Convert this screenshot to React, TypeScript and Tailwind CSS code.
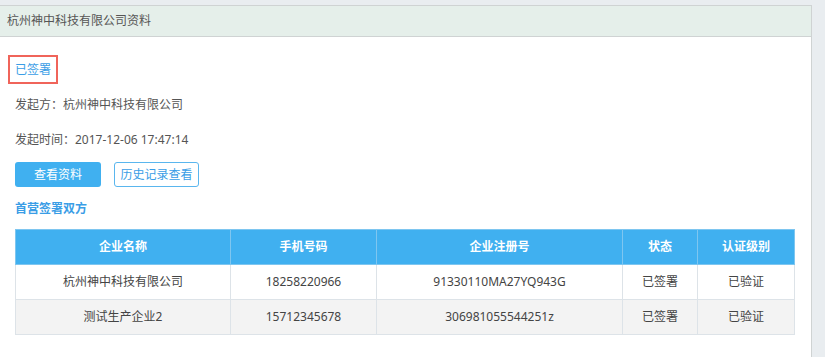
const rows = [
  { name: "杭州神中科技有限公司", phone: "18258220966", reg: "91330110MA27YQ943G", status: "已签署", level: "已验证" },
  { name: "测试生产企业2", phone: "15712345678", reg: "306981055544251z", status: "已签署", level: "已验证" },
];

const cols = ["w-[215px]", "w-[146px]", "w-[246px]", "w-[75px]", "w-[97px]"];

export default function App() {
  return (
    <div
      className="flex h-[357px] w-[825px] bg-[#e9edf0] pt-[5px]"
      style={{ fontFamily: '"Noto Sans", "Noto Sans CJK SC", sans-serif' }}
    >
      <div className="w-[812px] border-r border-t border-[#cfd3d3] bg-white">
        <div className="flex h-[31px] items-center border-b border-[#cfd3d3] bg-[#e5efea] pl-[7px] text-[12px] text-[#555]">
          杭州神中科技有限公司资料
        </div>
        <div className="px-[15px]">
          <div className="-ml-[7px] mt-[18px] inline-flex h-[29px] items-center border-2 border-[#f0645a] px-[5px] text-[12px] text-[#3a9de6]">
            已签署
          </div>
          <div className="mt-[13px] text-[12px] leading-[16px] text-[#555]">发起方：杭州神中科技有限公司</div>
          <div className="mt-[19px] text-[12px] leading-[16px] text-[#555]">发起时间：2017-12-06 17:47:14</div>
          <div className="mt-[14px] flex gap-[13px]">
            <button className="h-[25px] w-[86px] rounded-[3px] bg-[#40b0f0] text-[12px] text-white">查看资料</button>
            <button className="h-[25px] w-[85px] rounded-[3px] border border-[#5ab6ee] bg-white text-[12px] text-[#3a9de6]">
              历史记录查看
            </button>
          </div>
          <div className="mt-[14px] text-[12px] font-bold leading-[16px] text-[#3a9de6]">首营签署双方</div>
          <table className="mt-[12px] border-collapse text-[12px]">
            <thead>
              <tr className="h-[35px] bg-[#40b0f0] text-white">
                {["企业名称", "手机号码", "企业注册号", "状态", "认证级别"].map((h, i) => (
                  <th key={h} className={`${cols[i]} border border-[#7ec6f0] font-bold`}>
                    {h}
                  </th>
                ))}
              </tr>
            </thead>
            <tbody>
              {rows.map((r, idx) => (
                <tr key={r.phone} className={`h-[35px] text-[#444] ${idx % 2 ? "bg-[#f3f3f3]" : "bg-white"}`}>
                  {[r.name, r.phone, r.reg, r.status, r.level].map((c, i) => (
                    <td key={i} className={`${cols[i]} border border-[#dde3e8] text-center`}>
                      {c}
                    </td>
                  ))}
                </tr>
              ))}
            </tbody>
          </table>
        </div>
      </div>
    </div>
  );
}
